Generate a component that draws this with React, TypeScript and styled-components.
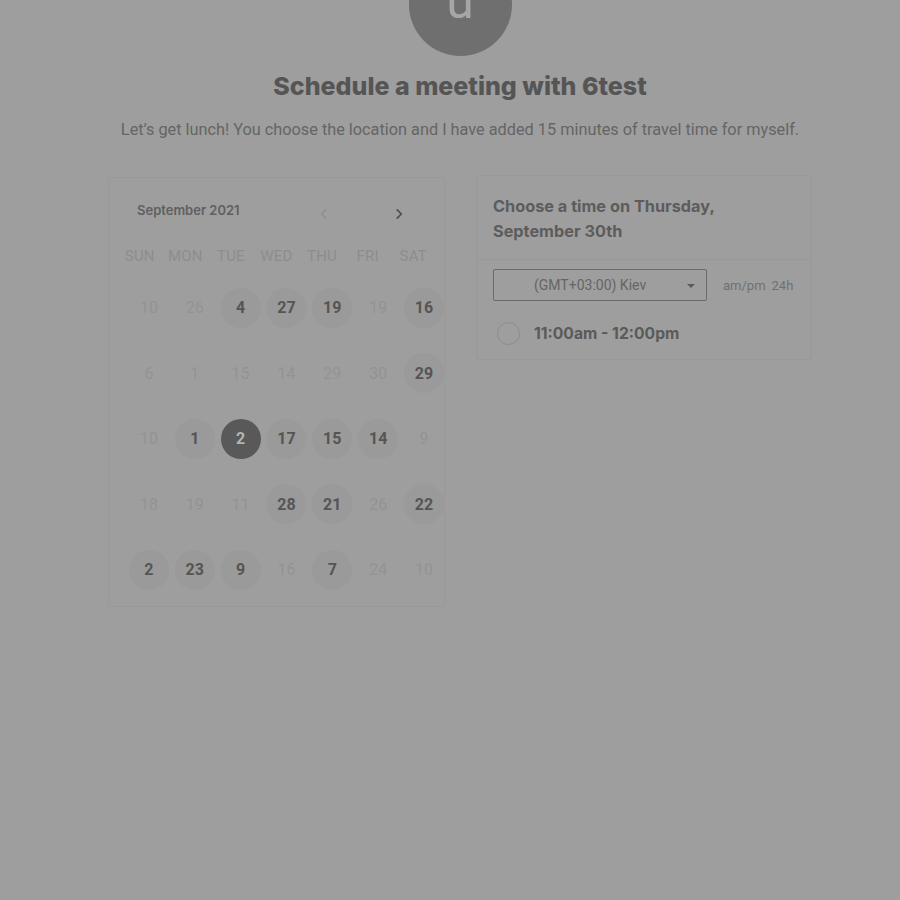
import React from "react";
import styled, { createGlobalStyle } from "styled-components";

const Global = createGlobalStyle`
  html, body { margin: 0; padding: 0; background: #9e9e9e; }
  body { font-family: Roboto, "Noto Sans", sans-serif; }
`;

const Page = styled.div`
  width: 900px;
  height: 900px;
  overflow: hidden;
  box-sizing: border-box;
  padding-left: 20px;
  display: flex;
  flex-direction: column;
  align-items: center;
`;

const Avatar = styled.div`
  width: 103px;
  height: 103px;
  margin-top: -47px;
  border-radius: 50%;
  background: #6f6f6f;
  color: #a6a6a6;
  font-family: Roboto, sans-serif;
  font-size: 50px;
  line-height: 1;
  display: flex;
  align-items: center;
  justify-content: center;
  padding-bottom: 8px;
  box-sizing: border-box;
`;

const Title = styled.h1`
  margin: 16px 0 0;
  font-family: Inter, sans-serif;
  font-weight: 800;
  font-size: 25px;
  line-height: 29px;
  color: #555555;
`;

const Subtitle = styled.p`
  margin: 19px 0 0;
  font-family: Roboto, sans-serif;
  font-size: 16.3px;
  line-height: 20px;
  color: #656565;
`;

const Columns = styled.div`
  margin-top: 37px;
  display: flex;
  gap: 31px;
  align-items: flex-start;
`;

const CalendarCard = styled.div`
  width: 337px;
  height: 430px;
  box-sizing: border-box;
  border: 1px solid #999999;
  border-radius: 3px;
  padding: 20px 8px 0;
  display: flex;
  flex-direction: column;
`;

const MonthRow = styled.div`
  display: flex;
  align-items: center;
  height: 24px;
  padding-left: 20px;
  gap: 59px;
`;

const MonthLabel = styled.div`
  font-family: Inter, sans-serif;
  font-weight: 600;
  font-size: 13px;
  color: #606060;
  width: 179px;
  flex-shrink: 0;
  margin-right: -59px;
`;

const NavButton = styled.button<{ $disabled?: boolean }>`
  border: none;
  background: none;
  padding: 0;
  width: 16px;
  height: 16px;
  margin-top: 8px;
  flex-shrink: 0;
  display: flex;
  align-items: center;
  justify-content: center;
  color: ${(p) => (p.$disabled ? "#909090" : "#4f4f4f")};
`;

const WeekRow = styled.div`
  margin-top: 24px;
  display: grid;
  grid-template-columns: repeat(7, 1fr);
  height: 20px;
  align-items: center;
`;

const WeekDay = styled.div`
  text-align: center;
  font-size: 15px;
  color: #8d8d8d;
  letter-spacing: 0.2px;
`;

const DateGrid = styled.div`
  margin-top: 9px;
  margin-left: 9px;
  margin-right: -20px;
  display: grid;
  grid-template-columns: repeat(7, 45.85px);
  grid-auto-rows: 65.5px;
`;

const DateCell = styled.div`
  display: flex;
  align-items: center;
  justify-content: center;
`;

const DayNum = styled.div<{ $state: "off" | "on" | "sel" }>`
  width: 40px;
  height: 40px;
  border-radius: 50%;
  display: flex;
  align-items: center;
  justify-content: center;
  font-size: 16px;
  font-weight: ${(p) => (p.$state === "off" ? 400 : 700)};
  color: ${(p) =>
    p.$state === "off" ? "#939393" : p.$state === "sel" ? "#b4b4b4" : "#555555"};
  background: ${(p) =>
    p.$state === "off" ? "transparent" : p.$state === "sel" ? "#595959" : "#9a9a9a"};
`;

const TimeCard = styled.div`
  width: 336px;
  box-sizing: border-box;
  border: 1px solid #999999;
  border-radius: 3px;
  margin-top: -2px;
`;

const TimeHeader = styled.div`
  padding: 18px 16px 15px;
  border-bottom: 1px solid #999999;
  font-family: Inter, sans-serif;
  font-weight: 700;
  font-size: 16.3px;
  line-height: 25px;
  color: #5c5c5c;
`;

const TimeBody = styled.div`
  padding: 9px 16px 6px;
`;

const ZoneRow = styled.div`
  display: flex;
  align-items: center;
  gap: 16px;
`;

const ZoneSelect = styled.div`
  width: 214px;
  height: 32px;
  box-sizing: border-box;
  border: 1px solid #6a6a6a;
  border-radius: 2px;
  display: flex;
  align-items: center;
  position: relative;
  font-size: 14px;
  color: #656565;
  padding-left: 40px;
`;

const Caret = styled.span`
  position: absolute;
  right: 11px;
  top: 14px;
  width: 0;
  height: 0;
  border-left: 4px solid transparent;
  border-right: 4px solid transparent;
  border-top: 4px solid #5a5a5a;
`;

const FormatToggle = styled.div`
  font-size: 13px;
  color: #707070;
  display: flex;
  gap: 6px;
`;

const SlotRow = styled.div`
  margin-top: 12px;
  display: flex;
  align-items: center;
  gap: 14px;
  padding-left: 4px;
  height: 40px;
`;

const Radio = styled.span`
  width: 21px;
  height: 21px;
  border-radius: 50%;
  border: 1.5px solid #8c8c8c;
  box-sizing: content-box;
`;

const SlotLabel = styled.span`
  font-family: Inter, sans-serif;
  font-weight: 700;
  font-size: 15.7px;
  color: #5a5a5a;
`;

type D = [string, "off" | "on" | "sel"];
const rows: D[][] = [
  [["10", "off"], ["26", "off"], ["4", "on"], ["27", "on"], ["19", "on"], ["19", "off"], ["16", "on"]],
  [["6", "off"], ["1", "off"], ["15", "off"], ["14", "off"], ["29", "off"], ["30", "off"], ["29", "on"]],
  [["10", "off"], ["1", "on"], ["2", "sel"], ["17", "on"], ["15", "on"], ["14", "on"], ["9", "off"]],
  [["18", "off"], ["19", "off"], ["11", "off"], ["28", "on"], ["21", "on"], ["26", "off"], ["22", "on"]],
  [["2", "on"], ["23", "on"], ["9", "on"], ["16", "off"], ["7", "on"], ["24", "off"], ["10", "off"]],
];

const Chevron = ({ dir }: { dir: "l" | "r" }) => (
  <svg width="14" height="14" viewBox="0 0 24 24" fill="none" stroke="currentColor" strokeWidth="3" strokeLinecap="round" strokeLinejoin="round">
    {dir === "l" ? <path d="M15 5l-7 7 7 7" /> : <path d="M9 5l7 7-7 7" />}
  </svg>
);

export default function App() {
  return (
    <>
      <Global />
      <Page>
        <Avatar>u</Avatar>
        <Title>Schedule a meeting with 6test</Title>
        <Subtitle>
          Let’s get lunch! You choose the location and I have added 15 minutes of travel time for myself.
        </Subtitle>
        <Columns>
          <CalendarCard>
            <MonthRow>
              <MonthLabel>September 2021</MonthLabel>
              <NavButton $disabled>
                <Chevron dir="l" />
              </NavButton>
              <NavButton>
                <Chevron dir="r" />
              </NavButton>
            </MonthRow>
            <WeekRow>
              {["SUN", "MON", "TUE", "WED", "THU", "FRI", "SAT"].map((d) => (
                <WeekDay key={d}>{d}</WeekDay>
              ))}
            </WeekRow>
            <DateGrid>
              {rows.flat().map(([n, s], i) => (
                <DateCell key={i}>
                  <DayNum $state={s}>{n}</DayNum>
                </DateCell>
              ))}
            </DateGrid>
          </CalendarCard>
          <TimeCard>
            <TimeHeader>
              Choose a time on Thursday,
              <br />
              September 30th
            </TimeHeader>
            <TimeBody>
              <ZoneRow>
                <ZoneSelect>
                  (GMT+03:00) Kiev
                  <Caret />
                </ZoneSelect>
                <FormatToggle>
                  <span>am/pm</span>
                  <span>24h</span>
                </FormatToggle>
              </ZoneRow>
              <SlotRow>
                <Radio />
                <SlotLabel>11:00am - 12:00pm</SlotLabel>
              </SlotRow>
            </TimeBody>
          </TimeCard>
        </Columns>
      </Page>
    </>
  );
}
